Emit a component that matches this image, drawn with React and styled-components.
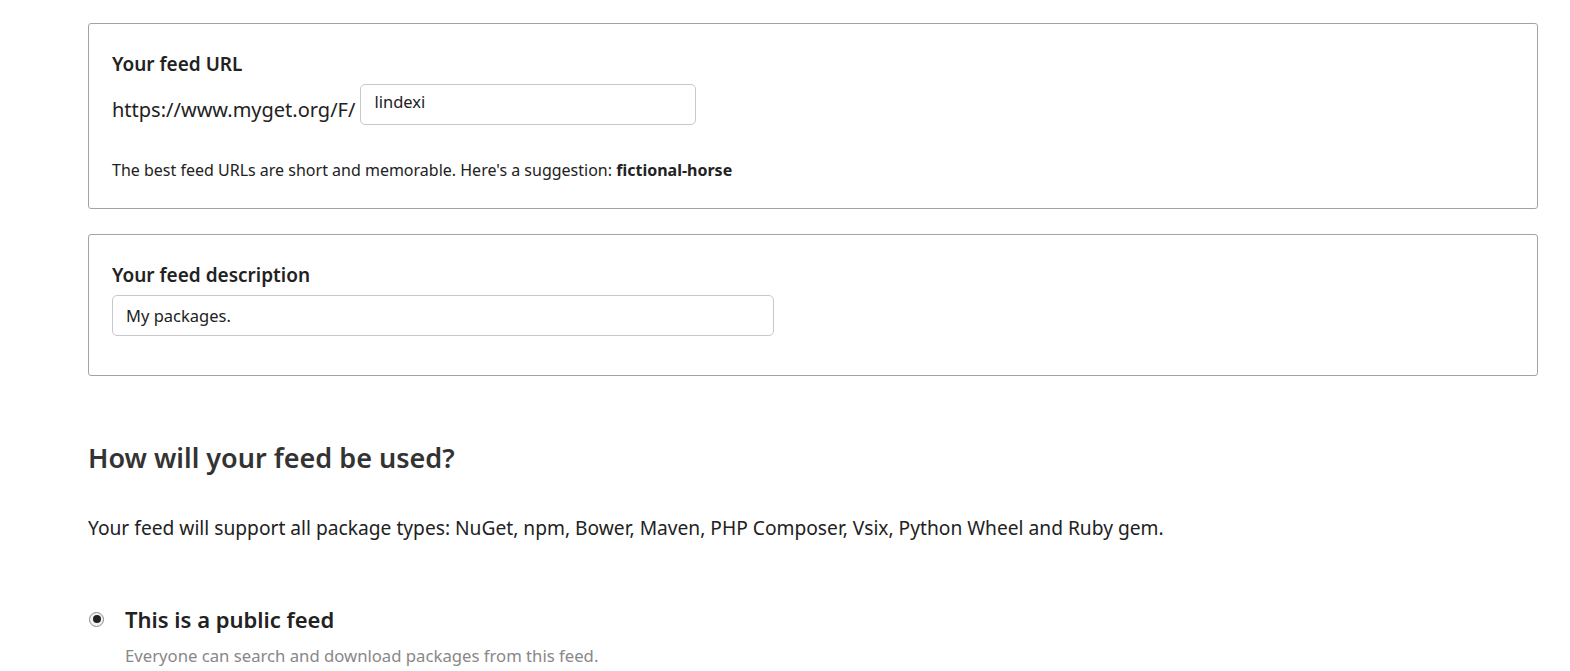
import React, { useState } from "react";
import styled, { createGlobalStyle } from "styled-components";

const GlobalStyle = createGlobalStyle`
  body {
    margin: 0;
    background: #fff;
    font-family: "Noto Sans", "Open Sans", sans-serif;
    color: #222;
  }
`;

const Page = styled.div`
  padding: 23px 0 0 88px;
  width: 1450px;
`;

const Panel = styled.div`
  border: 1px solid #a3a3a3;
  border-radius: 3px;
  padding: ${(p) => p.padding || "28px 23px"};
  margin-bottom: 25px;
`;

const Label = styled.div`
  font-size: 19px;
  font-weight: 600;
  color: #222;
  line-height: 24px;
  margin-bottom: 8px;
`;

const UrlRow = styled.div`
  display: flex;
  align-items: center;
  gap: 5px;
`;

const Prefix = styled.span`
  font-size: 20px;
  color: #222;
  margin-top: 10px;
`;

const TextInput = styled.input`
  box-sizing: border-box;
  width: ${(p) => p.width}px;
  height: 41px;
  border: 1px solid #c8c8c8;
  border-radius: 5px;
  padding: 0 13px;
  font-family: inherit;
  font-size: 16.5px;
  color: #222;
  outline: none;
  padding-bottom: ${(p) => (p.raised ? "6px" : "0")};
`;

const Hint = styled.p`
  margin: 34px 0 0;
  font-size: 16px;
  color: #222;
  b {
    font-weight: 700;
  }
`;

const Heading = styled.h2`
  margin: 64px 0 0;
  font-size: 27px;
  font-weight: 600;
  color: #333;
  line-height: 36px;
`;

const Lead = styled.p`
  margin: 39px 0 0;
  font-size: 19.2px;
  color: #222;
  line-height: 26px;
`;

const Option = styled.label`
  display: grid;
  grid-template-columns: 37px 1fr;
  align-items: center;
  margin-top: 63px;
  cursor: pointer;
`;

const Radio = styled.span`
  width: 15px;
  height: 15px;
  margin-left: 1px;
  border-radius: 50%;
  border: 1px solid #8a8a8a;
  box-sizing: border-box;
  display: flex;
  align-items: center;
  justify-content: center;
  background: #f2f2f2;
  &::after {
    content: "";
    width: 8px;
    height: 8px;
    border-radius: 50%;
    background: ${(p) => (p.checked ? "#222" : "transparent")};
  }
`;

const OptionTitle = styled.span`
  font-size: 22px;
  font-weight: 600;
  color: #222;
  line-height: 30px;
`;

const OptionDesc = styled.span`
  grid-column: 2;
  font-size: 16.7px;
  color: #888;
  margin-top: 10px;
`;

export default function App() {
  const [url, setUrl] = useState("lindexi");
  const [desc, setDesc] = useState("My packages.");
  const [isPublic, setIsPublic] = useState(true);

  return (
    <Page>
      <GlobalStyle />
      <Panel padding="28px 23px 27px 23px">
        <Label>Your feed URL</Label>
        <UrlRow>
          <Prefix>https://www.myget.org/F/</Prefix>
          <TextInput
            width={336}
            raised
            value={url}
            onChange={(e) => setUrl(e.target.value)}
          />
        </UrlRow>
        <Hint>
          The best feed URLs are short and memorable. Here's a suggestion:{" "}
          <b>fictional-horse</b>
        </Hint>
      </Panel>
      <Panel padding="28px 23px 39px 23px">
        <Label>Your feed description</Label>
        <TextInput
          width={662}
          value={desc}
          onChange={(e) => setDesc(e.target.value)}
        />
      </Panel>
      <Heading>How will your feed be used?</Heading>
      <Lead>
        Your feed will support all package types: NuGet, npm, Bower, Maven, PHP
        Composer, Vsix, Python Wheel and Ruby gem.
      </Lead>
      <Option onClick={() => setIsPublic(true)}>
        <Radio checked={isPublic} />
        <OptionTitle>This is a public feed</OptionTitle>
        <OptionDesc>
          Everyone can search and download packages from this feed.
        </OptionDesc>
      </Option>
    </Page>
  );
}
